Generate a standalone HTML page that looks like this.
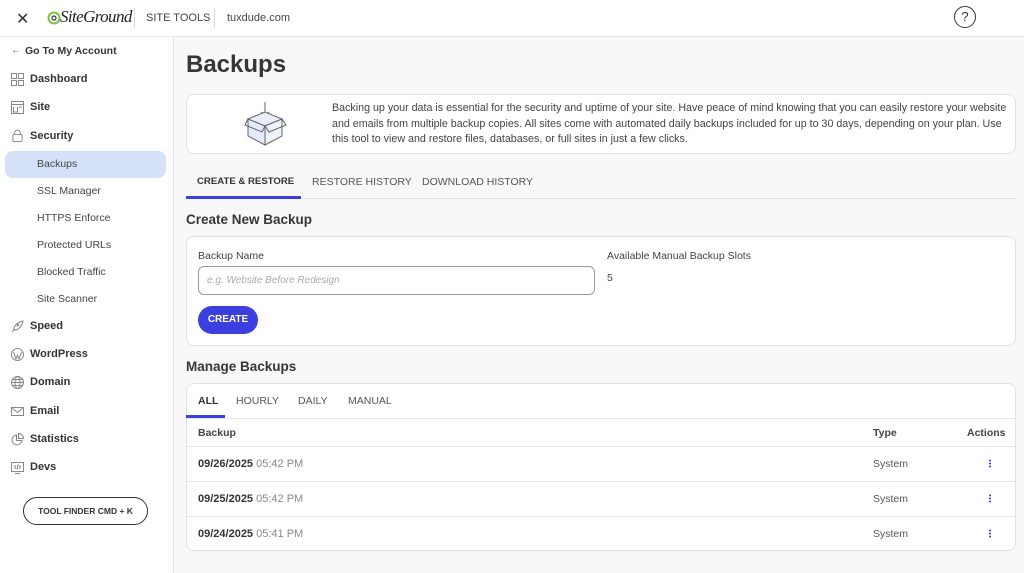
<!DOCTYPE html>
<html><head><meta charset="utf-8"><style>
*{box-sizing:border-box;margin:0;padding:0}
body{width:1024px;height:573px;overflow:hidden;font-family:"Liberation Sans",sans-serif;background:#f8f8f8;color:#363636;position:relative}
.a{position:absolute}
.top{left:0;top:0;width:1024px;height:37px;background:#fff;border-bottom:1px solid #e6e6e6}
.side{left:0;top:37px;width:174px;height:536px;background:#fff;border-right:1px solid #e6e6e6}
.nav{position:absolute;left:30px;font-size:11px;font-weight:bold;color:#333}
.sub{position:absolute;left:37px;font-size:10.5px;color:#444}
.ic{position:absolute;left:11px;width:13px;height:13px}
.card{background:#fff;border:1px solid #e2e2e2;border-radius:8px}
.tab{position:absolute;font-size:10.5px;color:#555}
.row{position:absolute;left:186px;width:830px;border-top:1px solid #e6e6e6;font-size:11px}
.dots{position:absolute;left:989px;width:2px;height:9px;background:radial-gradient(circle,#3c3fe0 0.9px,transparent 1.1px) 0 0/2px 3px}
</style></head><body>
<div class="a top"></div>
<div class="a" style="left:16px;top:9px;font-size:16px;color:#333">✕</div>
<svg class="a" style="left:47px;top:10px" width="14" height="16" viewBox="0 0 14 16"><circle cx="7" cy="8" r="5.5" fill="none" stroke="#7cc243" stroke-width="2"/><circle cx="7" cy="8" r="2" fill="none" stroke="#333" stroke-width="1.2"/></svg>
<div class="a" style="left:60px;top:7px;font-size:17px;font-family:'Liberation Serif',serif;font-style:italic;color:#222;letter-spacing:-0.6px">SiteGround</div>
<div class="a" style="left:134px;top:8px;width:1px;height:20px;background:#ddd"></div>
<div class="a" style="left:146px;top:12px;font-size:11px;color:#444">SITE TOOLS</div>
<div class="a" style="left:214px;top:8px;width:1px;height:20px;background:#ddd"></div>
<div class="a" style="left:227px;top:12px;font-size:11px;color:#444">tuxdude.com</div>
<div class="a" style="left:954px;top:6px;width:22px;height:22px;border:1.5px solid #333;border-radius:50%;text-align:center;font-size:13px;line-height:19px">?</div>

<div class="a side"></div>
<div class="a" style="left:11px;top:45px;font-size:10px;color:#666">←</div>
<div class="nav" style="left:25px;top:45px;font-size:10.5px">Go To My Account</div>
<svg class="ic" style="top:73px" viewBox="0 0 13 13" fill="none" stroke="#888"><rect x=".5" y=".5" width="5" height="5"/><rect x="7.5" y=".5" width="5" height="5"/><rect x=".5" y="7.5" width="5" height="5"/><rect x="7.5" y="7.5" width="5" height="5"/></svg>
<div class="nav" style="top:73px">Dashboard</div>
<svg class="ic" style="top:101px" viewBox="0 0 13 13" fill="none" stroke="#888"><rect x=".5" y=".5" width="12" height="12"/><path d="M.5 3.5h12M2.5 6v5h4V6M8 6h3"/></svg>
<div class="nav" style="top:101px">Site</div>
<svg class="ic" style="top:129px" viewBox="0 0 13 14" fill="none" stroke="#888"><path d="M3.5 6V4a3 3 0 016 0v2"/><rect x="1.5" y="6" width="10" height="7.5" rx="1"/></svg>
<div class="nav" style="top:130px">Security</div>
<div class="a" style="left:5px;top:151px;width:161px;height:27px;background:#d4e1f9;border-radius:8px"></div>
<div class="sub" style="top:158px">Backups</div>
<div class="sub" style="top:185px">SSL Manager</div>
<div class="sub" style="top:212px">HTTPS Enforce</div>
<div class="sub" style="top:239px">Protected URLs</div>
<div class="sub" style="top:266px">Blocked Traffic</div>
<div class="sub" style="top:293px">Site Scanner</div>
<svg class="ic" style="top:320px" viewBox="0 0 13 13" fill="none" stroke="#888"><path d="M3 10C2 7 6 2 12 1c-1 6-6 10-9 9zM1 12l3-3M8 5a1 1 0 100 .1"/></svg>
<div class="nav" style="top:320px">Speed</div>
<svg class="ic" style="top:348px" viewBox="0 0 13 13" fill="none" stroke="#888"><circle cx="6.5" cy="6.5" r="6"/><path d="M2.5 4l2.5 7 1.5-4 1.5 4 2.5-7"/></svg>
<div class="nav" style="top:348px">WordPress</div>
<svg class="ic" style="top:376px" viewBox="0 0 13 13" fill="none" stroke="#888"><circle cx="6.5" cy="6.5" r="6"/><ellipse cx="6.5" cy="6.5" rx="2.5" ry="6"/><path d="M.5 6.5h12M1.5 3.5h10M1.5 9.5h10"/></svg>
<div class="nav" style="top:376px">Domain</div>
<svg class="ic" style="top:405px" viewBox="0 0 13 13" fill="none" stroke="#888"><rect x=".5" y="2.5" width="12" height="8"/><path d="M.5 2.5l6 5 6-5"/></svg>
<div class="nav" style="top:405px">Email</div>
<svg class="ic" style="top:433px" viewBox="0 0 13 13" fill="none" stroke="#888"><path d="M5.5 2a5 5 0 105.5 5.5H5.5z"/><path d="M7.5.5v5h5a5 5 0 00-5-5z"/></svg>
<div class="nav" style="top:433px">Statistics</div>
<svg class="ic" style="top:461px" viewBox="0 0 13 13" fill="none" stroke="#888"><rect x=".5" y="1.5" width="12" height="9"/><path d="M5 4L3.5 6 5 8M8 4l1.5 2L8 8M7 3.5L6 8.5M4 12.5h5"/></svg>
<div class="nav" style="top:461px">Devs</div>
<div class="a" style="left:23px;top:497px;width:125px;height:28px;border:1px solid #333;border-radius:14px;text-align:center;font-size:8.5px;font-weight:bold;line-height:26px;color:#333">TOOL FINDER CMD + K</div>

<div class="a" style="left:186px;top:51px;font-size:24px;font-weight:bold;color:#363636">Backups</div>
<div class="a card" style="left:186px;top:94px;width:830px;height:60px"></div>
<svg class="a" style="left:244px;top:101px" width="44" height="46" viewBox="0 0 44 46" fill="none" stroke="#666" stroke-width="1"><path d="M21 1v14M17 11l4 4 4-4"/><path d="M4 18l17-7 17 7-17 7z" fill="#e8eefa"/><path d="M4 18v17l17 9V25z" fill="#e4ebfa"/><path d="M38 18v17l-17 9V25z" fill="#eef2fb"/><path d="M4 18l-3 6 17 7 3-6M38 18l4 6-17 7-4-6"/></svg>
<div class="a" style="left:332px;top:101px;width:684px;font-size:10.7px;line-height:15.5px;color:#444">Backing up your data is essential for the security and uptime of your site. Have peace of mind knowing that you can easily restore your website and emails from multiple backup copies. All sites come with automated daily backups included for up to 30 days, depending on your plan. Use this tool to view and restore files, databases, or full sites in just a few clicks.</div>

<div class="a" style="left:186px;top:198px;width:830px;height:1px;background:#e2e2e2"></div>
<div class="a" style="left:186px;top:196px;width:115px;height:3px;background:#3c3fe0"></div>
<div class="tab" style="left:197px;top:176px;font-weight:bold;color:#333;font-size:9.6px">CREATE &amp; RESTORE</div>
<div class="tab" style="left:312px;top:176px">RESTORE HISTORY</div>
<div class="tab" style="left:422px;top:176px">DOWNLOAD HISTORY</div>

<div class="a" style="left:186px;top:212px;font-size:13.5px;font-weight:bold;color:#363636">Create New Backup</div>
<div class="a card" style="left:186px;top:236px;width:830px;height:110px"></div>
<div class="a" style="left:198px;top:250px;font-size:10.5px;color:#444">Backup Name</div>
<div class="a" style="left:198px;top:266px;width:397px;height:29px;border:1px solid #999;border-radius:6px;background:#fff"></div>
<div class="a" style="left:207px;top:275px;font-size:10px;font-style:italic;color:#aaa">e.g. Website Before Redesign</div>
<div class="a" style="left:607px;top:250px;font-size:10.5px;color:#444">Available Manual Backup Slots</div>
<div class="a" style="left:607px;top:272px;font-size:10.5px;color:#444">5</div>
<div class="a" style="left:198px;top:306px;width:60px;height:28px;border-radius:14px;background:#3c3fe0;color:#fff;font-size:10px;font-weight:bold;text-align:center;line-height:28px">CREATE</div>

<div class="a" style="left:186px;top:359px;font-size:13.5px;font-weight:bold;color:#363636">Manage Backups</div>
<div class="a card" style="left:186px;top:383px;width:830px;height:168px"></div>
<div class="a" style="left:186px;top:415px;width:39px;height:3px;background:#3c3fe0"></div>
<div class="tab" style="left:198px;top:395px;font-weight:bold;color:#333">ALL</div>
<div class="tab" style="left:236px;top:395px">HOURLY</div>
<div class="tab" style="left:298px;top:395px">DAILY</div>
<div class="tab" style="left:348px;top:395px">MANUAL</div>
<div class="row" style="top:418px;height:29px"></div>
<div class="a" style="left:198px;top:427px;font-size:10.5px;font-weight:bold;color:#444">Backup</div>
<div class="a" style="left:873px;top:427px;font-size:10.5px;font-weight:bold;color:#444">Type</div>
<div class="a" style="left:967px;top:427px;font-size:10.5px;font-weight:bold;color:#444">Actions</div>
<div class="row" style="top:446px"></div>
<div class="row" style="top:481px"></div>
<div class="row" style="top:516px"></div>
<div class="a" style="left:198px;top:458px;font-size:11px"><b style="color:#333">09/26/2025</b> <span style="color:#888">05:42 PM</span></div>
<div class="a" style="left:198px;top:493px;font-size:11px"><b style="color:#333">09/25/2025</b> <span style="color:#888">05:42 PM</span></div>
<div class="a" style="left:198px;top:528px;font-size:11px"><b style="color:#333">09/24/2025</b> <span style="color:#888">05:41 PM</span></div>
<div class="a" style="left:873px;top:458px;font-size:10.5px;color:#555">System</div>
<div class="a" style="left:873px;top:493px;font-size:10.5px;color:#555">System</div>
<div class="a" style="left:873px;top:528px;font-size:10.5px;color:#555">System</div>
<div class="dots" style="top:459px"></div>
<div class="dots" style="top:494px"></div>
<div class="dots" style="top:529px"></div>
</body></html>
